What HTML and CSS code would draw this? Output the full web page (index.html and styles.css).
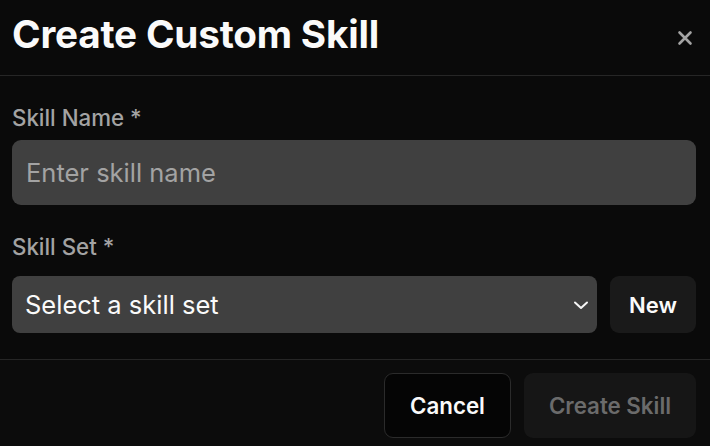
FILE: index.html
```html
<!DOCTYPE html>
<html>
<head>
<meta charset="utf-8">
<link rel="stylesheet" href="styles.css">
</head>
<body>
<div class="dialog">
  <header class="head">
    <h1 class="title">Create Custom Skill</h1>
    <button class="close" aria-label="Close">
      <svg width="16" height="16" viewBox="0 0 16 16"><path d="M2.5 2.5 L13.5 13.5 M13.5 2.5 L2.5 13.5" stroke="#a3a3a3" stroke-width="2.6" stroke-linecap="round"/></svg>
    </button>
  </header>
  <main class="body">
    <div class="field">
      <label class="label">Skill Name *</label>
      <div class="input">Enter skill name</div>
    </div>
    <div class="field field-set">
      <label class="label">Skill Set *</label>
      <div class="row">
        <div class="select">
          <span>Select a skill set</span>
          <svg width="20" height="20" viewBox="0 0 20 20"><path d="M4 7.5 L10 13 L16 7.5" fill="none" stroke="#f5f5f5" stroke-width="2" stroke-linecap="round" stroke-linejoin="round"/></svg>
        </div>
        <button class="btn-new">New</button>
      </div>
    </div>
  </main>
  <footer class="foot">
    <button class="btn cancel">Cancel</button>
    <button class="btn create">Create Skill</button>
  </footer>
</div>
</body>
</html>
```
FILE: styles.css
```css
* { box-sizing: border-box; }
html, body { margin: 0; padding: 0; background: #0a0a0a; }
body { font-family: Inter, "Noto Sans", sans-serif; color: #fafafa; width: 710px; height: 446px; overflow: hidden; }
.dialog { display: flex; flex-direction: column; height: 446px; }
.head { display: flex; align-items: center; justify-content: space-between; height: 76px; padding: 0 17px 0 12px; border-bottom: 1px solid #262626; }
.title { margin: 0 0 7px; font-size: 38.7px; font-weight: 700; letter-spacing: -0.2px; color: #fafafa; }
.close { background: none; border: none; padding: 0; display: flex; }
.body { padding: 30px 14px 26px 12px; display: flex; flex-direction: column; gap: 30px; border-bottom: 1px solid #262626; }
.field { display: flex; flex-direction: column; gap: 10px; }
.field-set { gap: 17px; }
.label { font-size: 22.3px; font-weight: 500; color: #a3a3a3; line-height: 24px; }
.input { height: 65px; background: #404040; border-radius: 9px; padding: 0 14px; display: flex; align-items: center; font-size: 25.5px; color: #a3a3a3; }
.row { display: flex; gap: 13px; }
.select { flex: 1; height: 57px; background: #404040; border-radius: 8px; padding: 0 6px 0 13px; display: flex; align-items: center; justify-content: space-between; font-size: 25.5px; color: #fafafa; }
.btn-new { width: 86px; height: 57px; background: #1a1a1a; border: none; border-radius: 9px; color: #fafafa; font-family: inherit; font-size: 22px; font-weight: 600; }
.foot { flex: 1; background: #0c0c0c; display: flex; justify-content: flex-end; align-items: flex-start; gap: 13px; padding: 13px 14px 0 0; }
.btn { height: 65px; border-radius: 9px; font-family: inherit; font-size: 22.3px; font-weight: 600; }
.cancel { width: 127px; background: #050505; border: 1px solid #2b2b2b; color: #fafafa; }
.create { width: 172px; background: #161616; border: none; color: #6b6b6b; }
```
